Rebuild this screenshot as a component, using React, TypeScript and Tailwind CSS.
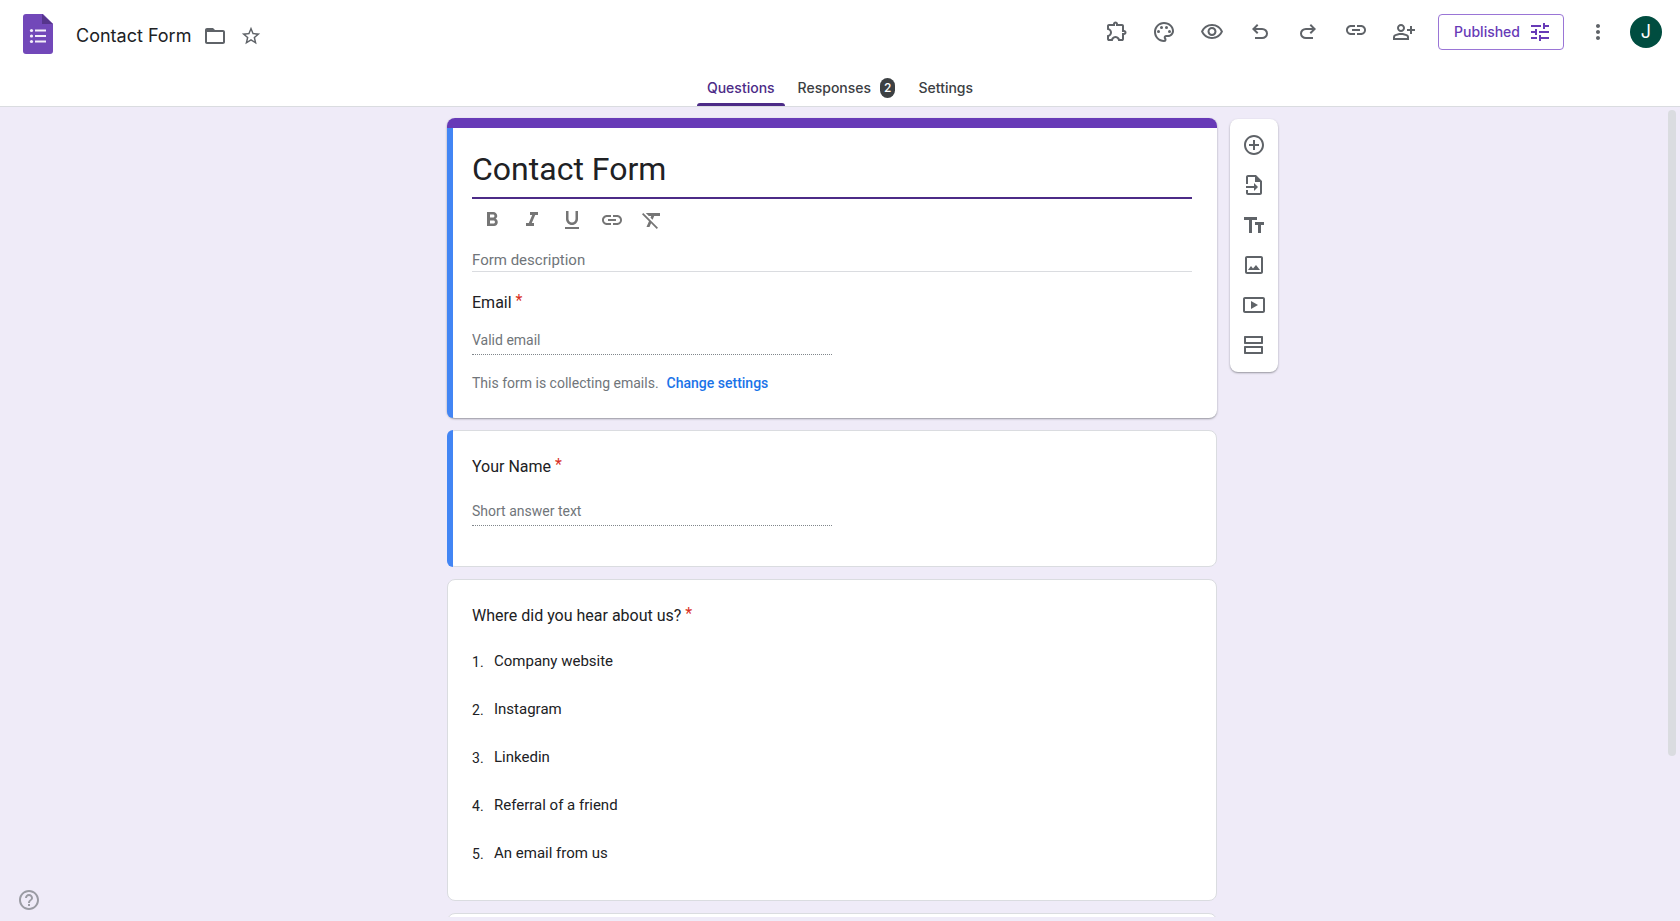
import { useState } from 'react';
import type { ReactNode } from 'react';
import {
  MdAddCircleOutline,
  MdFormatBold,
  MdFormatClear,
  MdFormatItalic,
  MdFormatUnderlined,
  MdHelpOutline,
  MdLink,
  MdMoreVert,
  MdOutlinePalette,
  MdOutlinePersonAddAlt,
  MdOutlineVisibility,
  MdStarBorder,
  MdTune,
} from 'react-icons/md';

function Symbol({ d, viewBox = '0 0 24 24' }: { d: string; viewBox?: string }) {
  return (
    <svg viewBox={viewBox} width={24} height={24} fill="currentColor" aria-hidden="true">
      <path fillRule="evenodd" d={d} />
    </svg>
  );
}

const extensionPath =
  'M352-120H200q-33 0-56.5-23.5T120-200v-152q48 0 84-30.5t36-77.5q0-47-36-77.5T120-568v-152q0-33 23.5-56.5T200-800h160q0-42 29-71t71-29q42 0 71 29t29 71h160q33 0 56.5 23.5T800-720v160q42 0 71 29t29 71q0 42-29 71t-71 29v160q0 33-23.5 56.5T720-120H568q0-50-31.5-85T460-240q-45 0-76.5 35T352-120Zm-152-80h85q24-66 77-93t98-27q45 0 98 27t77 93h85v-240h80q8 0 14-6t6-14q0-8-6-14t-14-6h-80v-240H480v-80q0-8-6-14t-14-6q-8 0-14 6t-6 14v80H200v88q54 20 87 67t33 105q0 57-33 104t-87 68v88Z';
const undoPath =
  'M280-200v-80h284q63 0 109.5-40T720-420q0-60-46.5-100T564-560H312l104 104-56 56-200-200 200-200 56 56-104 104h252q97 0 166.5 63T800-420q0 94-69.5 157T564-200H280Z';
const redoPath =
  'M396-200q-97 0-166.5-63T160-420q0-94 69.5-157T396-640h252L544-744l56-56 200 200-200 200-56-56 104-104H396q-63 0-109.5 40T240-420q0 60 46.5 100T396-280h284v80H396Z';
const linkPath =
  'M3.9 12c0-1.71 1.39-3.1 3.1-3.1h4V7H7c-2.76 0-5 2.24-5 5s2.24 5 5 5h4v-1.9H7c-1.71 0-3.1-1.39-3.1-3.1zM8 13h8v-2H8v2zm9-6h-4v1.9h4c1.71 0 3.1 1.39 3.1 3.1s-1.39 3.1-3.1 3.1h-4V17h4c2.76 0 5-2.24 5-5s-2.24-5-5-5z';
const folderPath =
  'M4 4h6l2 2h8c1.1 0 2 .9 2 2v10c0 1.1-.9 2-2 2H4c-1.1 0-2-.9-2-2V6c0-1.1.9-2 2-2zM4 8v10h16V8z';

const headerActions = [
  { name: 'Add-ons', icon: <Symbol viewBox="0 -960 960 960" d={extensionPath} /> },
  { name: 'Customize theme', icon: <MdOutlinePalette size={24} /> },
  { name: 'Preview', icon: <MdOutlineVisibility size={24} /> },
  { name: 'Undo', icon: <Symbol viewBox="0 -960 960 960" d={undoPath} /> },
  { name: 'Redo', icon: <Symbol viewBox="0 -960 960 960" d={redoPath} /> },
  { name: 'Copy responder link', icon: <Symbol viewBox="0 2 24 24" d={linkPath} /> },
  { name: 'Share', icon: <MdOutlinePersonAddAlt size={24} /> },
];

const formatActions = [
  { name: 'Bold', icon: <MdFormatBold size={24} /> },
  { name: 'Italic', icon: <MdFormatItalic size={24} /> },
  { name: 'Underline', icon: <MdFormatUnderlined size={24} /> },
  { name: 'Insert link', icon: <MdLink size={24} /> },
  { name: 'Remove formatting', icon: <MdFormatClear size={24} /> },
];

const insertActions = [
  { name: 'Add question', icon: <MdAddCircleOutline size={24} /> },
  {
    name: 'Import questions',
    icon: (
      <Symbol d="M6 2h8l6 6v12c0 1.1-.9 2-2 2H6c-1.1 0-2-.9-2-2v-3h2v3h12V9h-5V4H6v7H4V4c0-1.1.9-2 2-2zM4 13h8v-3l4 4-4 4v-3H4z" />
    ),
  },
  {
    name: 'Add title and description',
    icon: <Symbol d="M2 4v3h5v13h3V7h5V4zM22 9h-9v3h3v8h3v-8h3z" />,
  },
  {
    name: 'Add image',
    icon: (
      <Symbol d="M5 3h14c1.1 0 2 .9 2 2v14c0 1.1-.9 2-2 2H5c-1.1 0-2-.9-2-2V5c0-1.1.9-2 2-2zM5 5v14h14V5zM6 17l3-4 2 2.5L14 12l4 5z" />
    ),
  },
  {
    name: 'Add video',
    icon: (
      <Symbol d="M3 4h18c1.1 0 2 .9 2 2v12c0 1.1-.9 2-2 2H3c-1.1 0-2-.9-2-2V6c0-1.1.9-2 2-2zM3 6v12h18V6zM9 8l7 4-7 4z" />
    ),
  },
  {
    name: 'Add section',
    icon: (
      <Symbol d="M3 3h17c.6 0 1 .4 1 1v6c0 .6-.4 1-1 1H3c-.6 0-1-.4-1-1V4c0-.6.4-1 1-1zM4 5v4h15V5zM3 13h17c.6 0 1 .4 1 1v6c0 .6-.4 1-1 1H3c-.6 0-1-.4-1-1v-6c0-.6.4-1 1-1zM4 15v4h15v-4z" />
    ),
  },
];

const tabs = [{ name: 'Questions' }, { name: 'Responses', count: 2 }, { name: 'Settings' }];

const options = ['Company website', 'Instagram', 'Linkedin', 'Referral of a friend', 'An email from us'];

function FormsLogo() {
  return (
    <svg viewBox="0 0 30 44" className="w-[30px] h-11" aria-hidden="true">
      <path fill="#7248b9" d="M3 0h17l10 10v27a3 3 0 0 1-3 3H3a3 3 0 0 1-3-3V3a3 3 0 0 1 3-3z" />
      <path fill="#56358c" d="M19 0l11 10H19z" />
      <g fill="#f3effa">
        <circle cx="8.5" cy="16.5" r="1.6" />
        <circle cx="8.5" cy="22" r="1.6" />
        <circle cx="8.5" cy="27.5" r="1.6" />
        <path d="M12 15.5h11v2H12zM12 21h11v2H12zM12 26.5h11v2H12z" />
      </g>
    </svg>
  );
}

function Card({ accent = false, children }: { accent?: boolean; children?: ReactNode }) {
  return (
    <section className="flex bg-white border border-[#dadce0] rounded-lg">
      {accent && <div className="w-[6px] -my-px -ml-px shrink-0 bg-[#4285f4] rounded-l-lg" />}
      <div className={accent ? 'flex-1 pl-[19px] pr-6 pt-6 pb-10' : 'flex-1 px-6 py-6'}>{children}</div>
    </section>
  );
}

function Required() {
  return <span className="pl-1 leading-none align-[2px] text-[#d93025]">*</span>;
}

export default function App() {
  const [activeTab, setActiveTab] = useState('Questions');
  const [title, setTitle] = useState('Contact Form');

  return (
    <div className="h-screen flex flex-col pb-1 bg-[#efebf8] text-[#202124] font-[Roboto,sans-serif]">
      <header className="bg-white border-b border-[#dadce0] font-[Inter,sans-serif]">
        <div className="h-16 flex items-center justify-between pl-[23px] pr-[18px]">
          <div className="flex items-center pt-2">
            <a href="#home" aria-label="Forms home">
              <FormsLogo />
            </a>
            <span className="ml-[23px] text-lg">{title}</span>
            <button aria-label="Move to folder" className="ml-1.5 w-9 h-9 flex items-center justify-center text-[#5f6368]">
              <Symbol d={folderPath} />
            </button>
            <button aria-label="Star" className="w-9 h-9 flex items-center justify-center text-[#5f6368]">
              <MdStarBorder size={22} />
            </button>
          </div>

          <div className="flex items-center text-[#5f6368]">
            {headerActions.map((action) => (
              <button key={action.name} aria-label={action.name} className="w-12 h-12 flex items-center justify-center">
                {action.icon}
              </button>
            ))}
            <button className="mx-[10px] h-9 pl-[15px] pr-[11px] flex items-center gap-2 border border-[#9a75d6] rounded text-sm font-medium text-[#673ab7]">
              Published
              <MdTune size={24} />
            </button>
            <button aria-label="More" className="w-12 h-12 flex items-center justify-center">
              <MdMoreVert size={24} />
            </button>
            <button aria-label="Account" className="ml-2 w-8 h-8 rounded-full bg-[#004d40] text-white text-lg">
              J
            </button>
          </div>
        </div>

        {/* Tabs */}
        <nav className="h-[42px] flex justify-center gap-[3px]">
          {tabs.map((tab) => (
            <button
              key={tab.name}
              onClick={() => setActiveTab(tab.name)}
              className={
                activeTab === tab.name
                  ? 'flex flex-col text-sm font-medium text-[#4c2b87]'
                  : 'flex flex-col text-sm font-medium text-[#3c4043]'
              }
            >
              <span className="flex-1 flex items-center px-[10px] pt-[9px]">
                {tab.name}
                {tab.count && (
                  <span className="ml-[9px] px-1 h-5 leading-5 rounded-full bg-[#3c4043] text-white text-xs">
                    {tab.count}
                  </span>
                )}
              </span>
              <span className={activeTab === tab.name ? 'w-full h-[3px] rounded-t bg-[#4c2b87]' : 'w-full h-[3px]'} />
            </button>
          ))}
        </nav>
      </header>

      <div className="flex-1 min-h-0 flex">
        <main className="flex-1 overflow-y-auto [scrollbar-width:none] grid grid-cols-[1fr_minmax(0,770px)_1fr] items-start pt-[11px]">
          <div className="col-start-2 flex flex-col gap-3">
            {/* Form header */}
            <section className="bg-white rounded-lg shadow-[0_1px_2px_rgba(60,64,67,0.5)]">
              <div className="h-[10px] rounded-t-lg bg-[#673ab7]" />
              <div className="flex">
                <div className="w-[6px] shrink-0 bg-[#4285f4] rounded-bl-lg" />
                <div className="flex-1 pl-[19px] pr-[25px] pt-3 pb-[25px]">
                  <input
                    aria-label="Form title"
                    value={title}
                    onChange={(e) => setTitle(e.target.value)}
                    className="block w-full h-[59px] text-[32px] border-b-2 border-[#4c2b87] outline-none"
                  />
                  <div className="flex py-[9px] text-[#757575]">
                    {formatActions.map((action) => (
                      <button key={action.name} aria-label={action.name} className="w-10 h-6 flex items-center justify-center">
                        {action.icon}
                      </button>
                    ))}
                  </div>
                  <input
                    aria-label="Form description"
                    placeholder="Form description"
                    className="block w-full mt-[7px] h-6 text-[15px] border-b border-[#dadce0] placeholder:text-[#70757a] outline-none"
                  />
                  <label htmlFor="email" className="block mt-[19px] text-base leading-6">
                    Email
                    <Required />
                  </label>
                  <input
                    id="email"
                    type="email"
                    placeholder="Valid email"
                    className="block w-1/2 mt-[13px] h-[27px] pb-0.5 text-sm border-b border-dotted border-[#80868b] placeholder:text-[#70757a] outline-none"
                  />
                  <p className="mt-[18px] text-sm leading-5 text-[#70757a]">
                    This form is collecting emails.
                    <a href="#settings" className="ml-2 font-medium text-[#1a73e8]">
                      Change settings
                    </a>
                  </p>
                </div>
              </div>
            </section>

            <Card accent>
              <label htmlFor="name" className="block text-base leading-6">
                Your Name
                <Required />
              </label>
              <input
                id="name"
                type="text"
                placeholder="Short answer text"
                className="block w-1/2 mt-5 h-[27px] pb-0.5 text-sm border-b border-dotted border-[#80868b] placeholder:text-[#70757a] outline-none"
              />
            </Card>

            <Card>
              <h2 className="text-base leading-6">
                Where did you hear about us?
                <Required />
              </h2>
              <ol className="mt-2">
                {options.map((option, i) => (
                  <li key={option} className="h-12 pt-[3px] flex items-center text-[15px]">
                    <span className="w-[22px] text-sm">{i + 1}.</span>
                    {option}
                  </li>
                ))}
              </ol>
            </Card>

            <Card />
          </div>

          {/* Insert toolbar */}
          <div className="sticky top-0 w-12 ml-[13px] mt-px pt-[6px] pb-[7px] bg-white rounded-lg text-[#5f6368] shadow-[0_1px_2px_rgba(60,64,67,0.5)]">
            {insertActions.map((action) => (
              <button key={action.name} aria-label={action.name} className="w-12 h-10 flex items-center justify-center">
                {action.icon}
              </button>
            ))}
          </div>
        </main>

        {/* Scroll track */}
        <div className="w-4 pt-[3px] flex justify-center">
          <div className="w-2 h-4/5 rounded-full bg-[#dadce0]" />
        </div>
      </div>

      <button aria-label="Help" className="fixed left-[17px] bottom-[9px] text-[#9a9ba3]">
        <MdHelpOutline size={24} />
      </button>
    </div>
  );
}
